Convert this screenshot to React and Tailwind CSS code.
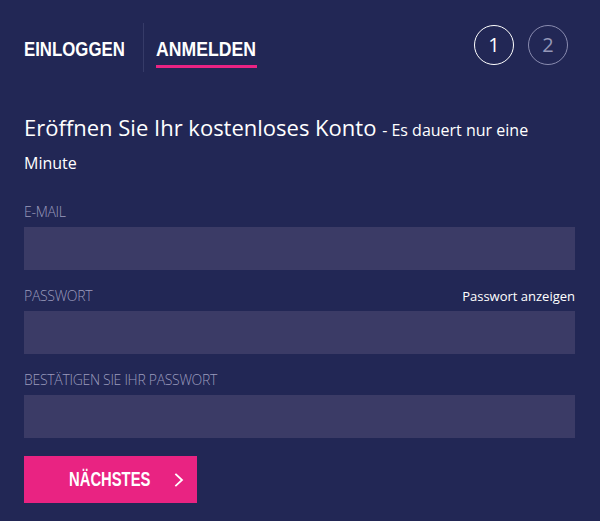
import React from "react";

const cond = { fontFamily: '"Liberation Sans", Arial, sans-serif' };

function Field({ label, right }) {
  return (
    <div className="flex flex-col">
      <div className="flex items-center justify-between h-[16px] mb-[7px]">
        <span className="text-[14px] leading-[16px] font-light uppercase text-[#9b9bbd] tracking-[-0.3px]">{label}</span>
        {right && <span className="text-[13px] leading-[16px] text-white">{right}</span>}
      </div>
      <div className="h-[43px] bg-[#3b3b66]" />
    </div>
  );
}

export default function App() {
  return (
    <div className="w-[600px] h-[521px] bg-[#222755] text-white px-[24px] pt-[23px]" style={{ fontFamily: '"Open Sans", sans-serif' }}>
      <div className="flex items-start justify-between">
        <div className="flex items-stretch h-[49px]">
          <div className="w-[101px] pt-[15px] whitespace-nowrap">
            <span className="inline-block origin-left scale-x-[0.8] text-[21px] leading-[22px] font-bold" style={cond}>EINLOGGEN</span>
          </div>
          <div className="ml-[18px] w-px bg-[#363b68]" />
          <div className="ml-[12px] w-[101px] pt-[15px] whitespace-nowrap">
            <span className="block origin-left scale-x-[0.84] text-[21px] leading-[22px] font-bold" style={cond}>ANMELDEN</span>
            <div className="h-[3px] bg-[#ea2383] mt-[5px]" />
          </div>
        </div>
        <div className="flex gap-[14px] pt-[2px] pr-[8px]">
          <div className="w-[40px] h-[40px] rounded-full border border-white flex items-center justify-center text-[20px]">1</div>
          <div className="w-[40px] h-[40px] rounded-full border border-[#8a8cb0] text-[#9597b8] flex items-center justify-center text-[20px]">2</div>
        </div>
      </div>
      <p className="mt-[39px] text-[22px] leading-[33px] text-white">
        Eröffnen Sie Ihr kostenloses Konto <span className="text-[16px] leading-[16px]">- Es dauert nur eine Minute</span>
      </p>
      <div className="mt-[27px] flex flex-col gap-[18px] pr-[1px]">
        <Field label="E-Mail" />
        <Field label="Passwort" right="Passwort anzeigen" />
        <Field label="Bestätigen Sie Ihr Passwort" />
      </div>
      <button className="mt-[18px] w-[173px] h-[47px] bg-[#e92382] flex items-center pl-[45px]">
        <span className="w-[81px] whitespace-nowrap text-left">
          <span className="inline-block origin-left scale-x-[0.74] text-[20px] leading-[22px] font-bold text-white" style={cond}>NÄCHSTES</span>
        </span>
        <svg className="ml-[24px]" width="10" height="14" viewBox="0 0 10 14" fill="none" stroke="white" strokeWidth="1.8" strokeLinecap="square"><path d="M2 1.5l6 5.5-6 5.5" /></svg>
      </button>
    </div>
  );
}
